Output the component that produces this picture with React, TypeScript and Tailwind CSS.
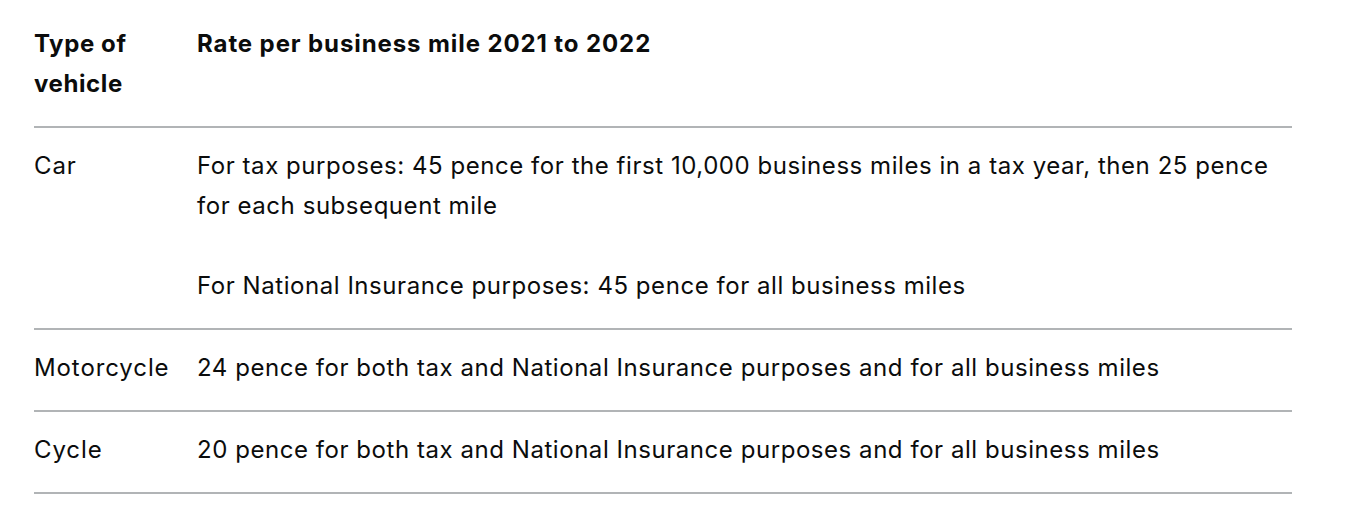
type Rate = { vehicle: string; rate: string[] };

const rates: Rate[] = [
  {
    vehicle: "Car",
    rate: [
      "For tax purposes: 45 pence for the first 10,000 business miles in a tax year, then 25 pence for each subsequent mile",
      "For National Insurance purposes: 45 pence for all business miles",
    ],
  },
  {
    vehicle: "Motorcycle",
    rate: [
      "24 pence for both tax and National Insurance purposes and for all business miles",
    ],
  },
  {
    vehicle: "Cycle",
    rate: [
      "20 pence for both tax and National Insurance purposes and for all business miles",
    ],
  },
];

export default function App() {
  return (
    <div className="min-h-[524px] bg-white pt-[6px] pl-[34px] font-['Inter',sans-serif] text-[24px] leading-[40px] tracking-[0.55px] text-[#0b0c0c]">
      <table className="w-[1258px] table-fixed border-collapse">
        <colgroup>
          <col className="w-[163px]" />
          <col />
        </colgroup>
        <thead>
          <tr className="border-b-2 border-[#b1b4b6]">
            <th className="pt-[18px] pr-[20px] pb-[22px] text-left align-top font-bold tracking-[0.6px]">
              Type of vehicle
            </th>
            <th className="pt-[18px] pb-[22px] text-left align-top font-bold tracking-[0.9px]">
              Rate per business mile 2021 to 2022
            </th>
          </tr>
        </thead>
        <tbody>
          {rates.map((r) => (
            <tr key={r.vehicle} className="border-b-2 border-[#b1b4b6]">
              <td className="pt-[18px] pr-[20px] pb-[22px] align-top tracking-[0.9px]">
                {r.vehicle}
              </td>
              <td className="pt-[18px] pb-[22px] align-top">
                {r.rate.map((p, i) => (
                  <p key={i} className={i > 0 ? "mt-[40px]" : ""}>
                    {p}
                  </p>
                ))}
              </td>
            </tr>
          ))}
        </tbody>
      </table>
    </div>
  );
}
